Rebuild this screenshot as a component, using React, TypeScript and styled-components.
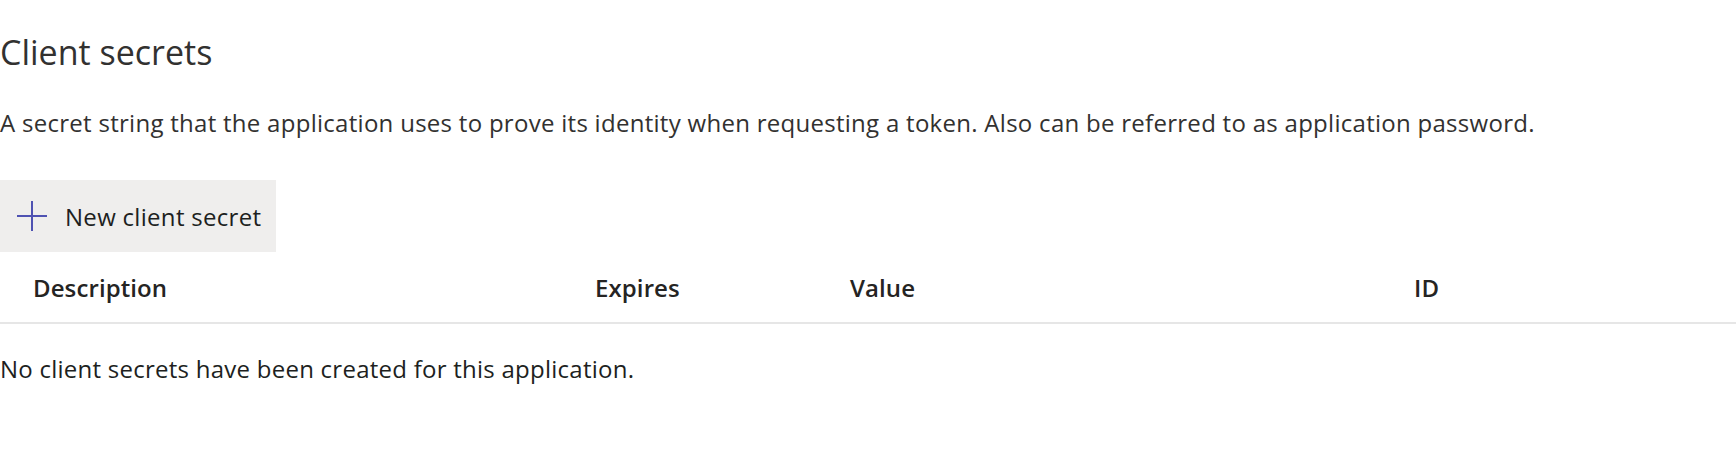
import React from "react";
import styled, { createGlobalStyle } from "styled-components";

const Global = createGlobalStyle`
  html, body { margin: 0; padding: 0; background: #ffffff; }
  body { font-family: "Open Sans", "Noto Sans", sans-serif; color: #323130; }
`;

const Page = styled.div`
  width: 1736px;
  height: 468px;
  display: flex;
  flex-direction: column;
  box-sizing: border-box;
  padding-top: 28px;
`;

const Title = styled.h2`
  margin: 0;
  font-size: 34px;
  font-weight: 400;
  line-height: 48px;
  color: #323130;
`;

const Lead = styled.p`
  margin: 31px 0 0 0;
  font-size: 24px;
  line-height: 32px;
  color: #323130;
  letter-spacing: 0.28px;
`;

const CommandButton = styled.button`
  margin-top: 41px;
  align-self: flex-start;
  display: flex;
  align-items: center;
  gap: 18px;
  width: 276px;
  height: 72px;
  padding: 0 0 0 17px;
  border: none;
  background: #efeeed;
  font-family: inherit;
  font-size: 24px;
  color: #201f1e;
  letter-spacing: 0.3px;
  cursor: pointer;
`;

const Table = styled.div`
  display: flex;
  flex-direction: column;
`;

const HeaderRow = styled.div`
  display: grid;
  grid-template-columns: 562px 255px 564px 1fr;
  height: 70px;
  align-items: center;
  border-bottom: 2px solid #e6e6e6;
`;

const HeaderCell = styled.div<{ $pad: number }>`
  padding-left: ${(p) => p.$pad}px;
  font-size: 24px;
  font-weight: 600;
  color: #252423;
  letter-spacing: 0.1px;
`;

const Empty = styled.div`
  margin-top: 29px;
  font-size: 24px;
  line-height: 32px;
  color: #201f1e;
  letter-spacing: 0.25px;
`;

const PlusIcon = () => (
  <svg width="30" height="30" viewBox="0 0 30 30" aria-hidden="true">
    <path d="M15 0v30M0 15h30" stroke="#4f52b2" strokeWidth="2" fill="none" />
  </svg>
);

export default function App() {
  return (
    <>
      <Global />
      <Page>
        <Title>Client secrets</Title>
        <Lead>
          A secret string that the application uses to prove its identity when requesting a token. Also can be referred to as application password.
        </Lead>
        <CommandButton>
          <PlusIcon />
          New client secret
        </CommandButton>
        <Table>
          <HeaderRow>
            <HeaderCell $pad={33}>Description</HeaderCell>
            <HeaderCell $pad={33}>Expires</HeaderCell>
            <HeaderCell $pad={33}>Value</HeaderCell>
            <HeaderCell $pad={33}>ID</HeaderCell>
          </HeaderRow>
          <Empty>No client secrets have been created for this application.</Empty>
        </Table>
      </Page>
    </>
  );
}
